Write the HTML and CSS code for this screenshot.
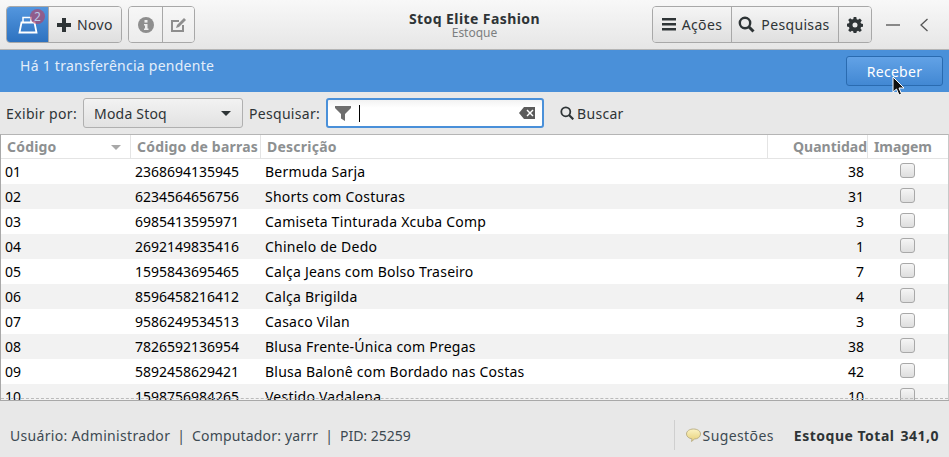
FILE: index.html
```html
<!DOCTYPE html>
<html lang="pt">
<head>
<meta charset="utf-8">
<title>Stoq Elite Fashion</title>
<link rel="stylesheet" href="styles.css">
</head>
<body>
<div class="app">
  <header class="hdr">
    <div class="group">
      <button class="btn active launcher">
        <svg width="20" height="18" viewBox="0 0 20 18"><path d="M3.500 6.500h13l2 10H1.500z" fill="none" stroke="#fff" stroke-width="1.800"/><path d="M5 6V1.500h8V6" fill="none" stroke="#fff" stroke-width="1.500"/></svg>
        <span class="badge">2</span>
      </button>
      <button class="btn novo">
        <svg width="14" height="14" viewBox="0 0 14 14"><path d="M5 0h4v5h5v4H9v5H5V9H0V5h5z" fill="#2e3436"/></svg>
        <span>Novo</span>
      </button>
    </div>
    <div class="group">
      <button class="btn icon plain">
        <svg width="16" height="16" viewBox="0 0 16 16"><circle cx="8" cy="8" r="8" fill="#8e8e8e"/><rect x="6.500" y="3" width="3" height="2.600" fill="#eee"/><path d="M6 7h3.500v4.400h1V13h-4.500v-1.600h1V8.500H6z" fill="#eee"/></svg>
      </button>
      <button class="btn icon plain narrow">
        <svg width="17" height="16" viewBox="0 0 17 16"><path d="M13 8v6H2V4h7" fill="none" stroke="#8e8e8e" stroke-width="2"/><path d="M6 11l1-3 7-7 2 2-7 7z" fill="#8e8e8e"/></svg>
      </button>
    </div>
    <div class="title">
      <div class="title-main">Stoq Elite Fashion</div>
      <div class="title-sub">Estoque</div>
    </div>
    <div class="group">
      <button class="btn acoes">
        <svg width="14" height="13" viewBox="0 0 14 13"><path d="M0 0h14v2.500H0zM0 5h14v2.500H0zM0 10h14v2.500H0z" fill="#2e3436"/></svg>
        <span>Ações</span>
      </button>
      <button class="btn pesq">
        <svg width="17" height="17" viewBox="0 0 17 17"><circle cx="7" cy="7" r="5.200" fill="none" stroke="#2e3436" stroke-width="2.400"/><path d="M10.500 10.500l5 5" stroke="#2e3436" stroke-width="3"/></svg>
        <span>Pesquisas</span>
      </button>
      <button class="btn icon gear">
        <svg width="16" height="16" viewBox="0 0 16 16"><path d="M6.700 0h2.600l.4 2.200 1.300.6 1.900-1.300 1.900 1.900-1.300 1.900.6 1.300 2.200.4v2.600l-2.200.4-.6 1.300 1.300 1.900-1.900 1.900-1.900-1.300-1.300.6-.4 2.200H6.700l-.4-2.200-1.300-.6-1.900 1.300-1.900-1.900 1.300-1.900-.6-1.300L-.3 9.300V6.700l2.200-.4.6-1.300-1.300-1.900 1.900-1.900 1.900 1.300 1.300-.6z M8 5.500a2.500 2.500 0 1 0 0 5 2.500 2.500 0 0 0 0-5z" fill="#2e3436" fill-rule="evenodd"/></svg>
      </button>
    </div>
    <div class="wm">
      <span class="minimize"></span>
      <svg width="10" height="14" viewBox="0 0 10 14"><path d="M8.500 1L2 7l6.500 6" fill="none" stroke="#555" stroke-width="1.300"/></svg>
    </div>
  </header>

  <section class="notice">
    <span class="notice-text">Há 1 transferência pendente</span>
    <button class="receber">Receber</button>
  </section>

  <section class="filter">
    <label class="lbl exibir">Exibir por:</label>
    <div class="combo"><span>Moda Stoq</span><i class="caret"></i></div>
    <label class="lbl pesquisar">Pesquisar:</label>
    <div class="entry">
      <svg width="16" height="15" viewBox="0 0 16 15"><path d="M0 0h16v2L10 8v7L6 12.500V8L0 2z" fill="#6e6e6e"/></svg>
      <i class="cursor"></i>
      <svg class="clear" width="16" height="12" viewBox="0 0 16 12"><path fill-rule="evenodd" d="M5 0h11v12H5L0 6zM7.500 3.500L10 6l-2.500 2.500 1 1L11 7l2.500 2.500 1-1L12 6l2.500-2.500-1-1L11 5 8.500 2.500z" fill="#5a5a5a"/></svg>
    </div>
    <div class="buscar">
      <svg width="14" height="14" viewBox="0 0 14 14"><circle cx="5.800" cy="5.800" r="4.500" fill="none" stroke="#2e3436" stroke-width="1.800"/><path d="M9 9l4.300 4.300" stroke="#2e3436" stroke-width="2.200"/></svg>
      <span>Buscar</span>
    </div>
  </section>

  <section class="table">
    <div class="row head">
      <div class="cell">Código<i class="sort"></i></div>
      <div class="cell">Código de barras</div>
      <div class="cell">Descrição</div>
      <div class="cell right">Quantidad</div>
      <div class="cell img">Imagem</div>
    </div>
    <div class="rows">
      <div class="row"><div class="cell">01</div><div class="cell">2368694135945</div><div class="cell">Bermuda Sarja</div><div class="cell right">38</div><div class="cell center"><i class="check"></i></div></div>
      <div class="row"><div class="cell">02</div><div class="cell">6234564656756</div><div class="cell">Shorts com Costuras</div><div class="cell right">31</div><div class="cell center"><i class="check"></i></div></div>
      <div class="row"><div class="cell">03</div><div class="cell">6985413595971</div><div class="cell">Camiseta Tinturada Xcuba Comp</div><div class="cell right">3</div><div class="cell center"><i class="check"></i></div></div>
      <div class="row"><div class="cell">04</div><div class="cell">2692149835416</div><div class="cell">Chinelo de Dedo</div><div class="cell right">1</div><div class="cell center"><i class="check"></i></div></div>
      <div class="row"><div class="cell">05</div><div class="cell">1595843695465</div><div class="cell">Calça Jeans com Bolso Traseiro</div><div class="cell right">7</div><div class="cell center"><i class="check"></i></div></div>
      <div class="row"><div class="cell">06</div><div class="cell">8596458216412</div><div class="cell">Calça Brigilda</div><div class="cell right">4</div><div class="cell center"><i class="check"></i></div></div>
      <div class="row"><div class="cell">07</div><div class="cell">9586249534513</div><div class="cell">Casaco Vilan</div><div class="cell right">3</div><div class="cell center"><i class="check"></i></div></div>
      <div class="row"><div class="cell">08</div><div class="cell">7826592136954</div><div class="cell">Blusa Frente-Única com Pregas</div><div class="cell right">38</div><div class="cell center"><i class="check"></i></div></div>
      <div class="row"><div class="cell">09</div><div class="cell">5892458629421</div><div class="cell">Blusa Balonê com Bordado nas Costas</div><div class="cell right">42</div><div class="cell center"><i class="check"></i></div></div>
      <div class="row"><div class="cell">10</div><div class="cell">1598756984265</div><div class="cell">Vestido Vadalena</div><div class="cell right">10</div><div class="cell center"><i class="check"></i></div></div>
    </div>
    <div class="dash"></div>
  </section>

  <footer class="status">
    <div class="info"><span class="user">Usuário: Administrador</span><span class="sep">|</span><span class="comp">Computador: yarrr</span><span class="sep">|</span><span>PID: 25259</span></div>
    <div class="sug">
      <svg width="15" height="14" viewBox="0 0 15 14"><defs><linearGradient id="bal" x1="0" y1="0" x2="0" y2="1"><stop offset="0" stop-color="#fbf3c4"/><stop offset="1" stop-color="#e6cf76"/></linearGradient></defs><path d="M7.500 1C11.500 1 14.500 3 14.500 6c0 3-3 5-6 5l-3 2.500.5-2.700C3 10.500.5 8.700.5 6 .5 3 3.500 1 7.500 1z" fill="url(#bal)" stroke="#bdb28a"/></svg>
      <span>Sugestões</span>
    </div>
    <div class="total"><span>Estoque Total</span><span>341,0</span></div>
  </footer>

  <svg class="pointer" width="14" height="20" viewBox="0 0 14 20"><path d="M1 1v15l3.500-3 2.500 6 2.500-1-2.500-6H12z" fill="#111" stroke="#fff" stroke-width="1"/></svg>
</div>
</body>
</html>
```
FILE: styles.css
```css
* { box-sizing: border-box; }
html, body { margin: 0; padding: 0; }
body { font-family: "Noto Sans", "Open Sans", sans-serif; font-size: 14px; color: #2e3436; background: #e8e8e8; }
.app { position: relative; width: 949px; height: 457px; overflow: hidden; display: flex; flex-direction: column; }

.hdr { height: 50px; display: flex; align-items: center; padding: 0 0 0 6px; gap: 6px; background: linear-gradient(#f8f8f8, #e6e6e6); border-bottom: 1px solid #b5b5b5; flex: none; }
.group { display: flex; height: 37px; border: 1px solid #a8a8a8; border-radius: 4px; overflow: hidden; }
.btn { height: 100%; border: 0; border-left: 1px solid #a8a8a8; padding: 0; margin: 0; background: linear-gradient(#f5f5f5, #dfdfdf); display: flex; align-items: center; justify-content: center; gap: 6px; font: inherit; color: #2e3436; position: relative; letter-spacing: .35px; }
.btn:first-child { border-left: 0; }
.btn.plain { background: linear-gradient(#f7f7f7, #ececec); }
.launcher { width: 41px; background: linear-gradient(#5396de, #2d72c0); }
.badge { position: absolute; left: 23px; top: 2px; width: 15px; height: 15px; border-radius: 50%; background: rgba(190, 60, 90, .6); color: #b9c9e8; font-size: 12px; line-height: 15px; text-align: center; }
.novo { width: 73px; }
.icon { width: 33px; }
.narrow { width: 32px; }
.title { flex: 1; text-align: center; padding: 1px 0 0 102px; line-height: 15px; }
.title-main { font-weight: 700; font-size: 14px; letter-spacing: .42px; }
.title-sub { font-size: 12px; line-height: 14px; color: #7c7f80; }
.acoes { width: 78px; gap: 6px; }
.pesq { width: 107px; padding-right: 2px; }
.gear { width: 33px; }
.wm { width: 64px; margin-left: 7px; display: flex; align-items: center; gap: 19px; padding-left: 1px; flex: none; }
.minimize { width: 14px; height: 2px; background: #888; }

.notice { height: 42px; background: #4a90d9; color: #fff; display: flex; justify-content: space-between; align-items: flex-start; padding: 6px 6px 0 20px; flex: none; }
.notice-text { line-height: 20px; color: #e4eefa; font-size: 14px; letter-spacing: .26px; }
.receber { width: 97px; height: 30px; border: 1px solid #2a6bb0; border-radius: 3px; background: linear-gradient(#62a2e6, #4288d3); color: #fff; font: inherit; letter-spacing: .3px; padding: 0; }

.filter { height: 42px; display: flex; align-items: center; padding: 0 0 0 6px; flex: none; }
.lbl { margin-right: 6px; }
.exibir { letter-spacing: .36px; }
.pesquisar { letter-spacing: .3px; }
.combo { width: 160px; height: 30px; margin-right: 6px; border: 1px solid #b0b0b0; border-radius: 3px; background: linear-gradient(#f2f2f2, #e2e2e2); display: flex; align-items: center; justify-content: space-between; padding: 0 11px 0 10px; letter-spacing: .2px; }
.caret { border: 5px solid transparent; border-top: 5px solid #2e3436; border-bottom: 0; width: 0; }
.entry { width: 218px; height: 30px; border: 2px solid #4a90d9; border-radius: 3px; background: linear-gradient(#f2f2f2, #fff 30%); display: flex; align-items: center; padding: 0 7px 0 7px; }
.cursor { width: 1px; height: 17px; background: #000; margin-left: 8px; }
.clear { margin-left: auto; }
.buscar { display: flex; align-items: center; gap: 3px; margin-left: 16px; letter-spacing: .3px; }

.table { position: relative; height: 266px; background: #fff; border: 1px solid #a8a8a8; border-bottom: 0; border-top-color: #b5b5b5; border-right-color: #c8c8c8; overflow: hidden; flex: none; display: flex; flex-direction: column; }
.rows { flex: 1; overflow: hidden; }
.row { display: grid; grid-template-columns: 130px 130px 507px 100px 80px; height: 25px; align-items: center; color: #000; }
.rows .row:nth-child(even) { background: #f2f2f2; }
.row .cell { padding-left: 4px; white-space: nowrap; overflow: hidden; }
.row .cell:nth-child(3) { letter-spacing: .23px; }
.row .right { padding-left: 0; padding-right: 4px; text-align: right; }
.row .center { padding: 0 2px 0 0; text-align: center; }
.head { height: 24px; flex: none; font-weight: 700; color: #8d9091; border-bottom: 1px solid #e4e4e4; }
.head .cell { height: 100%; display: flex; align-items: center; border-right: 1px solid #e4e4e4; padding-left: 6px; position: relative; letter-spacing: .2px; }
.head .right { justify-content: flex-end; padding-right: 0; letter-spacing: 0; }
.head .img { border-right: 0; padding-left: 6px; letter-spacing: -.1px; }
.sort { position: absolute; right: 9px; top: 10px; border: 5px solid transparent; border-top: 5px solid #a8a8a8; border-bottom: 0; }
.check { display: inline-block; width: 15px; height: 15px; border: 1px solid #a8a8a8; border-radius: 3px; background: linear-gradient(#f5f5f5, #dedede); vertical-align: middle; margin-top: -6px; }
.dash { position: absolute; left: 0; right: 0; bottom: 1px; border-bottom: 1px dashed #bbb; }

.status { flex: 1; display: flex; align-items: center; border-top: 1px solid #a8a8a8; padding: 12px 10px 0 10px; position: relative; }
.info { flex: 1; color: #3d4a52; }
.user { letter-spacing: .32px; }
.comp { letter-spacing: .18px; }
.sep { margin: 0 7px; }
.sug { display: flex; align-items: center; gap: 2px; height: 30px; padding-left: 11px; border-left: 1px solid #cfcfcf; color: #3d4a52; margin-right: 20px; letter-spacing: .4px; }
.total { display: flex; gap: 6px; font-weight: 700; letter-spacing: .5px; }
.pointer { position: absolute; left: 892px; top: 76px; }
```
